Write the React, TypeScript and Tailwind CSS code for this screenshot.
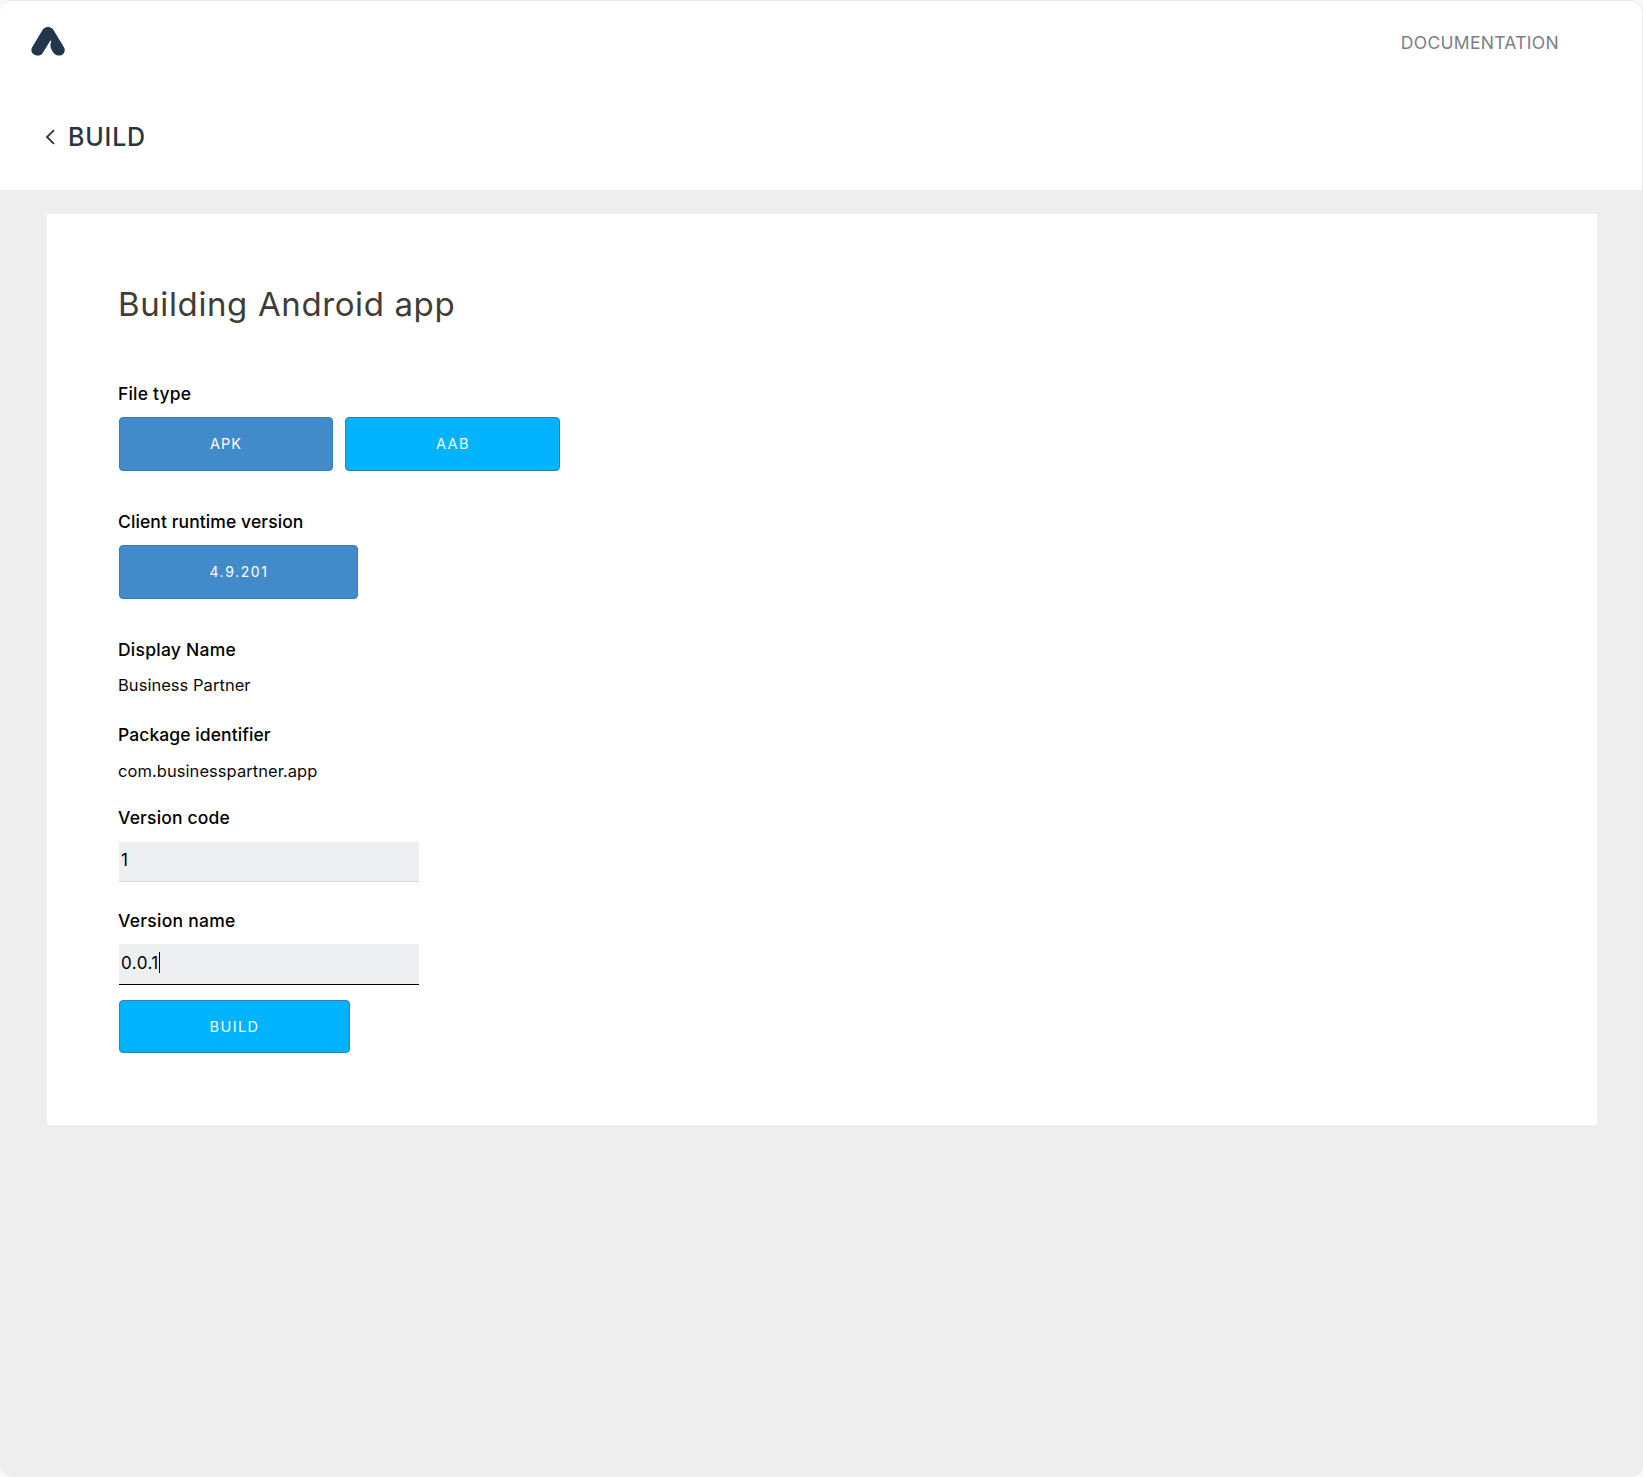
import { ReactNode } from "react";

const BUTTON = "flex cursor-pointer justify-center rounded-[4px] border border-[#357ebd] pt-4 leading-5 text-white";
const LABEL = "text-[17.5px] leading-6 font-medium text-black";
const INPUT = "flex w-[300px] border-b bg-[#edeff1] text-[17px] leading-6 text-black";

function Logo() {
  return (
    <svg width="35" height="30" viewBox="0 0 35 30" fill="#22374b">
      <path d="M17 0C19.8 0 21.6 1.4 22.8 3.4L33.1 20.5C35.1 24.5 32.2 28.6 28 28.6C24.6 28.6 22.6 26.6 21.2 23.8C19.8 21.2 19 19.6 19.6 16.6L20.2 14C20.4 13 19.8 12.8 19.3 13.7L11.7 26C10.5 27.8 8.8 28.6 6.6 28.6C2 28.6 -1 24.5 1 20.5L11.2 3.4C12.4 1.4 14.2 0 17 0Z" />
    </svg>
  );
}

function Label({ className, children }: { className: string; children: ReactNode }) {
  return <h2 className={`${LABEL} ${className}`}>{children}</h2>;
}

export default function App() {
  return (
    <div className="h-[1477px] w-[1643px] bg-[#f8f8f8] font-[Inter,sans-serif]">
      <div className="flex h-full w-full flex-col overflow-hidden rounded-[13px] border-t border-r border-[#e8e8e8] bg-[#eeeeee]">
        <header className="h-[189px] shrink-0 bg-white">
          <div className="flex items-start justify-between pt-[26px] pr-[83px] pl-[31px]">
            <Logo />
            <a className="mt-1 text-[17.5px] leading-6 tracking-[0.3px] text-[#7b7e85]">DOCUMENTATION</a>
          </div>
          <div className="mt-[66px] flex items-center pl-[45px]">
            <svg width="11" height="16" viewBox="0 0 11 16" fill="none" stroke="#2a3443" strokeWidth="1.8">
              <path d="M9 1.2L2 8L9 14.8" />
            </svg>
            <h1 className="ml-[12px] text-[25px] leading-7 font-medium tracking-[0.8px] text-[#2a3443]">BUILD</h1>
          </div>
        </header>
        <main className="mt-6 ml-[47px] flex h-[911px] w-[1550px] flex-col items-start bg-white pt-[70px] pl-[72px]">
          <h1 className="-ml-px text-[33px] leading-10 tracking-[0.62px] text-[#3f3d37]">Building Android app</h1>

          <Label className="mt-[58px] -ml-px tracking-[0.17px]">File type</Label>
          <div className="mt-[11px] flex gap-3">
            <button className={`${BUTTON} h-[54px] w-[214px] bg-[#428bca] text-[14.5px] tracking-[1.07px]`}>APK</button>
            <button className={`${BUTTON} h-[54px] w-[215px] bg-[#00b3ff] pl-px text-[14.5px] tracking-[1.5px]`}>AAB</button>
          </div>

          <Label className="mt-[39px] -ml-px tracking-[0.09px]">Client runtime version</Label>
          <button className={`${BUTTON} mt-[11px] h-[54px] w-[239px] bg-[#428bca] pl-px text-[14px] tracking-[1.6px]`}>4.9.201</button>

          <Label className="mt-[39px] -ml-px tracking-[0.24px]">Display Name</Label>
          <p className="mt-[11px] -ml-px text-[16.5px] leading-6 tracking-[0.04px] text-[#0a0a0a]">Business Partner</p>

          <Label className="mt-[26px] -ml-px tracking-[0.08px]">Package identifier</Label>
          <p className="mt-3 -ml-px text-[16.5px] leading-6 tracking-[0.06px] text-[#0a0a0a]">com.businesspartner.app</p>

          <Label className="mt-[23px] -ml-px tracking-[0.18px]">Version code</Label>
          <div className={`${INPUT} mt-3 h-[40px] border-[#d3d5d8] pt-[6px] pl-[2px]`}>1</div>

          <Label className="mt-[27px] -ml-px tracking-[0.27px]">Version name</Label>
          <div className={`${INPUT} mt-[11px] h-[41px] items-start border-black pt-[7px] pl-[2px]`}>
            <span className="tracking-[0.45px]">0.0.1</span>
            <span className="mt-px h-[21px] w-px bg-black" />
          </div>

          <button className={`${BUTTON} mt-[15px] h-[53px] w-[231px] bg-[#00b3ff] text-[14.5px] tracking-[1.43px]`}>BUILD</button>
        </main>
      </div>
    </div>
  );
}
